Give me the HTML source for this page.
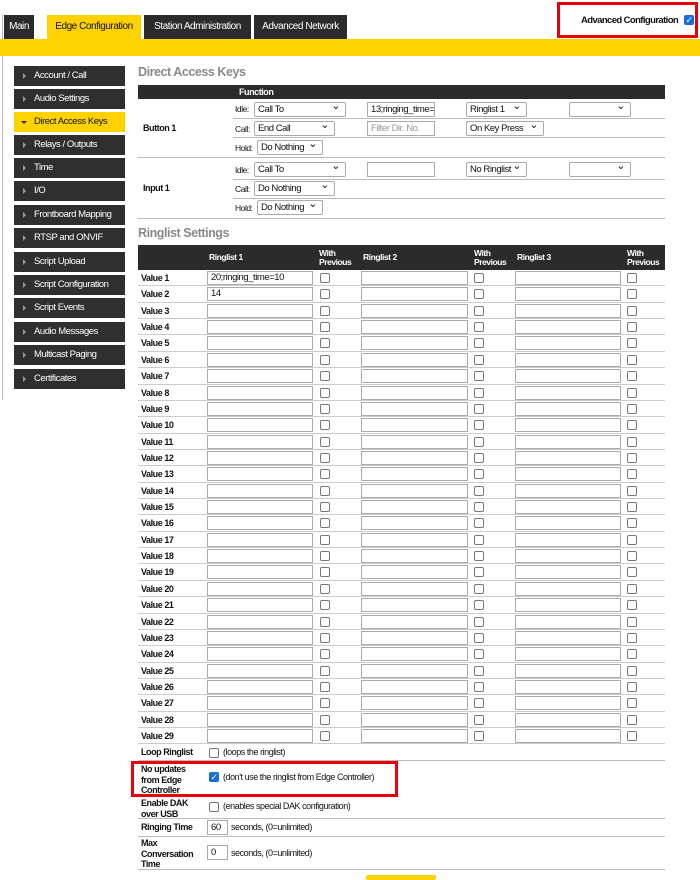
<!DOCTYPE html>
<html><head><meta charset="utf-8"><style>
*{box-sizing:border-box;margin:0;padding:0}
body{width:700px;height:878px;background:#fff;position:relative;overflow:hidden;font-family:"Liberation Sans",sans-serif;font-size:9.5px;letter-spacing:-0.45px;white-space:nowrap;color:#111}
.a{position:absolute}
.tab{position:absolute;top:15px;height:24px;background:#2b2b2b;color:#fff;font-size:10px;line-height:24px;text-align:center}
.side{position:absolute;left:14px;width:111px;height:20px;background:#2f2f2f;color:#fff;font-size:9.5px;line-height:20px;padding-left:20px}
.side:before{content:"";position:absolute;left:9px;top:7px;border-left:3px solid #999;border-top:3px solid transparent;border-bottom:3px solid transparent}
.side.on{background:#fdd200;color:#111}
.side.on:before{border-top:3px solid #333;border-left:3px solid transparent;border-right:3px solid transparent;border-bottom:0;left:7px;top:9px}
h2{position:absolute;left:138px;font-size:12.5px;color:#8a8a8a;font-weight:bold}
.sel{position:absolute;height:15px;border:1px solid #aaa;border-radius:2px;background:#fff;font-size:9.5px;line-height:13px;padding-left:3px;overflow:hidden}
.sel:after{content:"⌄";position:absolute;right:5px;top:-3px;font-size:11px}
.inp{position:absolute;height:15px;border:1px solid #aaa;background:#fff;font-size:9.5px;line-height:13px;padding-left:3px;overflow:hidden}
.lbl{position:absolute;font-size:8.5px}
.hl{position:absolute;left:138px;width:527px;height:1px;background:#bbb}
.b{font-weight:bold}
.row{position:absolute;left:138px;width:527px;height:16.36px;border-bottom:1px solid #ccc}
.row .n{position:absolute;left:3px;top:3px;font-weight:bold;font-size:9px}
.row .i{position:absolute;top:1px;height:14px;border:1px solid #aaa;background:#fff;font-size:9.5px;padding-left:3px;line-height:12px}
.cb{position:absolute;width:10px;height:10px;border:1px solid #777;border-radius:2px;background:#fff}
.row .cb{top:3px}
.s{font-size:9px}
</style></head><body>
<div class="a" style="left:2px;top:15px;width:1px;height:385px;background:#bbb"></div>
<div class="tab" style="left:4px;width:30px">Main</div>
<div class="tab" style="left:47px;width:94px;background:#fdd200;color:#111">Edge Configuration</div>
<div class="tab" style="left:144px;width:107px">Station Administration</div>
<div class="tab" style="left:254px;width:93px">Advanced Network</div>
<div class="a" style="left:557px;top:2px;width:141px;height:36px;border:3px solid #e8000b"></div>
<div class="a b" style="left:581px;top:15px;font-size:9.5px;letter-spacing:-0.6px">Advanced Configuration</div>
<div class="a" style="left:684px;top:15px;width:10px;height:10px;background:#1a6fd6;border-radius:2px;color:#fff;font-size:9px;line-height:10px;text-align:center">✓</div>
<div class="a" style="left:0;top:39px;width:700px;height:17px;background:#fdd200"></div>

<div class="side" style="top:66px">Account / Call</div>
<div class="side" style="top:89px">Audio Settings</div>
<div class="side on" style="top:112px">Direct Access Keys</div>
<div class="side" style="top:135px">Relays / Outputs</div>
<div class="side" style="top:158px">Time</div>
<div class="side" style="top:181px">I/O</div>
<div class="side" style="top:205px">Frontboard Mapping</div>
<div class="side" style="top:228px">RTSP and ONVIF</div>
<div class="side" style="top:252px">Script Upload</div>
<div class="side" style="top:275px">Script Configuration</div>
<div class="side" style="top:298px">Script Events</div>
<div class="side" style="top:322px">Audio Messages</div>
<div class="side" style="top:345px">Multicast Paging</div>
<div class="side" style="top:369px">Certificates</div>

<h2 style="top:65px">Direct Access Keys</h2>
<div class="a" style="left:138px;top:85px;width:527px;height:14px;background:#2b2b2b;color:#fff;font-weight:bold;font-size:9px;padding-left:101px;line-height:14px">Function</div>
<div class="a b s" style="left:143px;top:123px">Button 1</div>
<div class="lbl" style="left:235px;top:104px">Idle:</div><div class="sel" style="left:254px;top:102px;width:92px">Call To</div>
<div class="inp" style="left:367px;top:102px;width:68px">13;ringing_time='</div>
<div class="sel" style="left:466px;top:102px;width:61px">Ringlist 1</div>
<div class="sel" style="left:569px;top:102px;width:62px"></div>
<div class="hl" style="left:233px;width:432px;top:118px"></div>
<div class="lbl" style="left:235px;top:124px">Call:</div><div class="sel" style="left:254px;top:121px;width:81px">End Call</div>
<div class="inp" style="left:367px;top:121px;width:68px;color:#999">Filter Dir. No.</div>
<div class="sel" style="left:466px;top:121px;width:78px">On Key Press</div>
<div class="hl" style="left:233px;width:432px;top:137px"></div>
<div class="lbl" style="left:235px;top:143px">Hold:</div><div class="sel" style="left:257px;top:140px;width:66px">Do Nothing</div>
<div class="hl" style="top:157px"></div>
<div class="a b s" style="left:143px;top:183px">Input 1</div>
<div class="lbl" style="left:235px;top:165px">Idle:</div><div class="sel" style="left:254px;top:162px;width:92px">Call To</div>
<div class="inp" style="left:367px;top:162px;width:68px"></div>
<div class="sel" style="left:466px;top:162px;width:61px">No Ringlist</div>
<div class="sel" style="left:569px;top:162px;width:62px"></div>
<div class="hl" style="left:233px;width:432px;top:179px"></div>
<div class="lbl" style="left:235px;top:184px">Call:</div><div class="sel" style="left:254px;top:181px;width:81px">Do Nothing</div>
<div class="hl" style="left:233px;width:432px;top:198px"></div>
<div class="lbl" style="left:235px;top:203px">Hold:</div><div class="sel" style="left:257px;top:200px;width:66px">Do Nothing</div>
<div class="hl" style="top:218px"></div>

<h2 style="top:226px">Ringlist Settings</h2>
<div class="a b" style="left:138px;top:245px;width:527px;height:25px;background:#2b2b2b;color:#fff;font-size:8.5px;line-height:9px">
<span class="a" style="left:71px;top:8px">Ringlist 1</span>
<span class="a" style="left:181px;top:4px">With<br>Previous</span>
<span class="a" style="left:225px;top:8px">Ringlist 2</span>
<span class="a" style="left:336px;top:4px">With<br>Previous</span>
<span class="a" style="left:379px;top:8px">Ringlist 3</span>
<span class="a" style="left:489px;top:4px">With<br>Previous</span>
</div>
<div id="rows"></div>
<script>
var h='';for(var k=1;k<=29;k++){var t=270+(k-1)*16.36;var v=k==1?'20;ringing_time=10':k==2?'14':'';
h+='<div class="row" style="top:'+t+'px"><span class="n">Value '+k+'</span><span class="i" style="left:69px;width:106px">'+v+'</span><span class="cb" style="left:182px"></span><span class="i" style="left:223px;width:107px"></span><span class="cb" style="left:336px"></span><span class="i" style="left:377px;width:106px"></span><span class="cb" style="left:489px"></span></div>';}
document.getElementById('rows').innerHTML=h;
</script>
<div class="a b s" style="left:141px;top:747px">Loop Ringlist</div>
<div class="cb" style="left:209px;top:748px"></div><div class="a s" style="left:223px;top:747px">(loops the ringlist)</div>
<div class="hl" style="top:760px"></div>
<div class="a b s" style="left:141px;top:764px;line-height:10.5px">No updates<br>from Edge<br>Controller</div>
<div class="a" style="left:209px;top:772px;width:10px;height:10px;background:#1a6fd6;border-radius:2px;color:#fff;font-size:9px;line-height:10px;text-align:center">✓</div>
<div class="a s" style="left:223px;top:772px">(don't use the ringlist from Edge Controller)</div>
<div class="a" style="left:131px;top:761px;width:267px;height:36px;border:3px solid #e8000b"></div>
<div class="a b s" style="left:141px;top:798px;line-height:10.5px">Enable DAK<br>over USB</div>
<div class="cb" style="left:209px;top:802px"></div><div class="a s" style="left:223px;top:801px">(enables special DAK configuration)</div>
<div class="hl" style="top:818px"></div>
<div class="a b s" style="left:141px;top:822px">Ringing Time</div>
<div class="inp" style="left:207px;top:820px;width:21px">60</div><div class="a s" style="left:231px;top:822px">seconds, (0=unlimited)</div>
<div class="hl" style="top:836px"></div>
<div class="a b s" style="left:141px;top:838px;line-height:10.5px">Max<br>Conversation<br>Time</div>
<div class="inp" style="left:207px;top:845px;width:21px">0</div><div class="a s" style="left:231px;top:848px">seconds, (0=unlimited)</div>
<div class="hl" style="top:869px"></div>
<div class="a" style="left:366px;top:875px;width:70px;height:5px;background:#fdd200;border-radius:2px"></div>
</body></html>
